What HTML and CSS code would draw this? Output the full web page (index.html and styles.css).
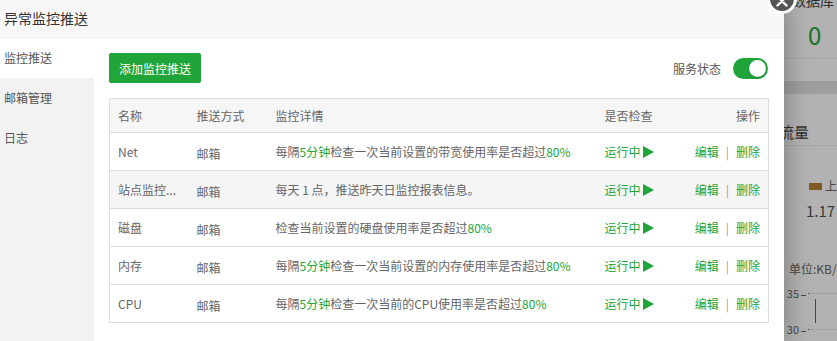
FILE: index.html
```html
<!DOCTYPE html>
<html lang="zh-CN">
<head>
    <meta charset="UTF-8">
    <meta name="viewport" content="width=device-width, initial-scale=1.0">
    <title>异常监控推送</title>
    <link rel="stylesheet" href="styles.css">
</head>
<body>

<div class="stage">
    <div class="dialog">
        <div class="dialog-title">异常监控推送</div>
        <div class="dialog-body">
            <ul class="side-nav">
                <li class="active">监控推送</li>
                <li>邮箱管理</li>
                <li>日志</li>
            </ul>

            <div class="panel">
                <div class="toolbar">
                    <button class="btn-green">添加监控推送</button>
                    <div class="service">
                        <span>服务状态</span>
                        <span class="switch on"></span>
                    </div>
                </div>

                <table class="push-table">
                    <colgroup>
                        <col class="c-name">
                        <col class="c-method">
                        <col class="c-detail">
                        <col class="c-check">
                        <col>
                    </colgroup>
                    <thead>
                        <tr>
                            <th>名称</th>
                            <th>推送方式</th>
                            <th>监控详情</th>
                            <th>是否检查</th>
                            <th class="right">操作</th>
                        </tr>
                    </thead>
                    <tbody>
                        <tr>
                            <td>Net</td>
                            <td class="method">邮箱</td>
                            <td>每隔<span class="green">5分钟</span>检查一次当前设置的带宽使用率是否超过<span class="green">80%</span></td>
                            <td><span class="running">运行中 <svg width="11" height="12" viewBox="0 0 11 12"><path d="M0 0 L11 6 L0 12 Z" fill="#20a53a"/></svg></span></td>
                            <td class="right"><a class="link">编辑</a><span class="sep">|</span><a class="link">删除</a></td>
                        </tr>
                        <tr class="hover">
                            <td title="站点监控报表">站点监控...</td>
                            <td class="method">邮箱</td>
                            <td>每天 1 点，推送昨天日监控报表信息。</td>
                            <td><span class="running">运行中 <svg width="11" height="12" viewBox="0 0 11 12"><path d="M0 0 L11 6 L0 12 Z" fill="#20a53a"/></svg></span></td>
                            <td class="right"><a class="link">编辑</a><span class="sep">|</span><a class="link">删除</a></td>
                        </tr>
                        <tr>
                            <td>磁盘</td>
                            <td class="method">邮箱</td>
                            <td>检查当前设置的硬盘使用率是否超过<span class="green">80%</span></td>
                            <td><span class="running">运行中 <svg width="11" height="12" viewBox="0 0 11 12"><path d="M0 0 L11 6 L0 12 Z" fill="#20a53a"/></svg></span></td>
                            <td class="right"><a class="link">编辑</a><span class="sep">|</span><a class="link">删除</a></td>
                        </tr>
                        <tr>
                            <td>内存</td>
                            <td class="method">邮箱</td>
                            <td>每隔<span class="green">5分钟</span>检查一次当前设置的内存使用率是否超过<span class="green">80%</span></td>
                            <td><span class="running">运行中 <svg width="11" height="12" viewBox="0 0 11 12"><path d="M0 0 L11 6 L0 12 Z" fill="#20a53a"/></svg></span></td>
                            <td class="right"><a class="link">编辑</a><span class="sep">|</span><a class="link">删除</a></td>
                        </tr>
                        <tr>
                            <td>CPU</td>
                            <td class="method">邮箱</td>
                            <td>每隔<span class="green">5分钟</span>检查一次当前的CPU使用率是否超过<span class="green">80%</span></td>
                            <td><span class="running">运行中 <svg width="11" height="12" viewBox="0 0 11 12"><path d="M0 0 L11 6 L0 12 Z" fill="#20a53a"/></svg></span></td>
                            <td class="right"><a class="link">编辑</a><span class="sep">|</span><a class="link">删除</a></td>
                        </tr>
                    </tbody>
                </table>
            </div>
        </div>

        <span class="close-btn"><svg width="12" height="12" viewBox="0 0 12 12"><path d="M1.5 1.5 L10.5 10.5 M10.5 1.5 L1.5 10.5" stroke="#fff" stroke-width="2.4" stroke-linecap="round"/></svg></span>
    </div>

    <!-- dashboard behind the shade -->
    <div class="behind">
        <div class="card db-card">
            <div class="db-name">数据库</div>
            <div class="db-value">0</div>
        </div>
        <div class="card flow-card">
            <div class="flow-title">流量</div>
            <div class="legend"><span class="swatch"></span>上</div>
            <div class="flow-num">1.17</div>
            <div class="unit">单位:KB/s</div>
            <div class="axis-row"><span class="tick-label">35</span><span class="grid"></span></div>
            <div class="axis-gap"></div>
            <div class="axis-row"><span class="tick-label">30</span><span class="grid"></span></div>
        </div>
    </div>
</div>

</body>
</html>
```

FILE: styles.css
```css
* {
    box-sizing: border-box;
}
body {
    margin: 0;
    font-family: "Noto Sans CJK SC", "Noto Sans", sans-serif;
    font-size: 12px;
    color: #666;
    overflow: hidden;
}
.stage {
    display: flex;
    height: 100vh;
}

/* dialog */
.dialog {
    position: relative;
    z-index: 2;
    flex: none;
    width: 784px;
    display: flex;
    flex-direction: column;
    background: #fff;
    box-shadow: 1px 1px 24px rgba(0, 0, 0, 0.3);
}
.dialog-title {
    height: 38px;
    line-height: 37px;
    padding-left: 4px;
    font-size: 14px;
    color: #333;
    background: #f8f8f8;
    border-bottom: 1px solid #eee;
}
.dialog-body {
    flex: 1;
    display: flex;
}
.close-btn {
    position: absolute;
    z-index: 3;
    right: -13px;
    top: -16px;
    width: 30px;
    height: 30px;
    border-radius: 50%;
    border: 3px solid #fff;
    background-color: #555;
    display: flex;
    align-items: center;
    justify-content: center;
    padding-top: 3px;
}

.side-nav {
    width: 94px;
    margin: 0;
    padding: 0;
    list-style: none;
    background: #f2f2f2;
}
.side-nav li {
    height: 40px;
    line-height: 40px;
    padding-left: 4px;
    color: #555;
}
.side-nav li.active {
    background: #fff;
}

.panel {
    flex: 1;
    padding: 15px;
}
.toolbar {
    display: flex;
    justify-content: space-between;
    align-items: center;
    height: 30px;
}
.btn-green {
    height: 30px;
    padding: 0 10px;
    border: 0;
    border-radius: 2px;
    background: #20a53a;
    color: #fff;
    font-family: inherit;
    font-size: 12px;
}
.service {
    display: flex;
    align-items: center;
    gap: 12px;
    color: #555;
    margin-right: 1px;
}
.switch {
    position: relative;
    width: 35px;
    height: 21px;
    border-radius: 11px;
    background: #20a53a;
}
.switch::after {
    content: "";
    position: absolute;
    right: 2px;
    top: 2px;
    width: 17px;
    height: 17px;
    border-radius: 50%;
    background: #fff;
    box-shadow: 0 1px 2px rgba(0, 0, 0, 0.25);
}

/* table */
.push-table {
    width: 100%;
    margin-top: 15px;
    border-collapse: collapse;
    table-layout: fixed;
    border: 1px solid #ddd;
}
.c-name { width: 79px; }
.c-method { width: 79px; }
.c-detail { width: 329px; }
.c-check { width: 90px; }
.push-table th {
    height: 34px;
    padding: 0 8px;
    font-weight: normal;
    text-align: left;
    color: #666;
    background: #f6f6f6;
    border-bottom: 1px solid #ddd;
}
.push-table td {
    height: 38px;
    padding: 0 8px;
    white-space: nowrap;
    border-bottom: 1px solid #ddd;
}
.push-table tr.hover td {
    background: #f5f5f5;
}
.push-table .method {
    padding-top: 4px;
}
.push-table .right {
    text-align: right;
}
.green {
    color: #20a53a;
}
.running {
    display: inline-flex;
    align-items: center;
    gap: 2px;
    color: #20a53a;
}
.link {
    color: #20a53a;
}
.sep {
    margin: 0 7px;
    color: #999;
}

/* page behind the shade */
.behind {
    position: relative;
    flex: 1;
    margin-left: -10px;
    background: #e2e2e2;
    overflow: hidden;
    color: #666;
    white-space: nowrap;
}
.behind::after {
    content: "";
    position: absolute;
    inset: 0;
    background: rgba(0, 0, 0, 0.3);
}
.card {
    background: #fff;
}
.db-card {
    height: 90px;
}
.db-name {
    height: 68px;
    margin-top: -9px;
    padding-left: 18px;
    font-size: 14px;
    line-height: 18px;
    color: #444;
    border-bottom: 1px solid #eee;
}
.db-value {
    position: relative;
    top: -36px;
    padding-left: 34px;
    font-size: 24px;
    line-height: 24px;
    color: #20a53a;
}
.flow-card {
    margin-top: 13px;
    height: 300px;
}
.flow-title {
    height: 52px;
    padding: 29px 0 0 5px;
    font-size: 15px;
    line-height: 18px;
    color: #444;
    border-bottom: 1px solid #eee;
}
.legend {
    display: flex;
    align-items: center;
    gap: 3px;
    margin-top: 32px;
    padding-left: 35px;
    font-size: 12px;
    line-height: 16px;
}
.swatch {
    width: 14px;
    height: 7px;
    background: #b68233;
}
.flow-num {
    margin-top: 8px;
    padding-left: 32px;
    font-size: 15px;
    line-height: 18px;
    color: #555;
}
.unit {
    margin-top: 41px;
    padding-left: 15px;
    font-size: 12px;
    line-height: 16px;
}
.axis-row {
    display: flex;
    align-items: center;
    height: 12px;
    margin-top: 10px;
}
.axis-row + .axis-gap + .axis-row {
    margin-top: 0;
}
.tick-label {
    width: 34px;
    padding-right: 2px;
    text-align: right;
    font-size: 11px;
    color: #666;
}
.tick-label::after {
    content: "";
    display: inline-block;
    width: 5px;
    height: 1px;
    margin-left: 2px;
    vertical-align: middle;
    background: #666;
}
.grid {
    flex: 1;
    height: 1px;
    background: #e6e6e6;
    border-left: 1px solid #666;
}
.axis-gap {
    height: 24px;
    margin-left: 41px;
    border-left: 1px solid #666;
}
```
